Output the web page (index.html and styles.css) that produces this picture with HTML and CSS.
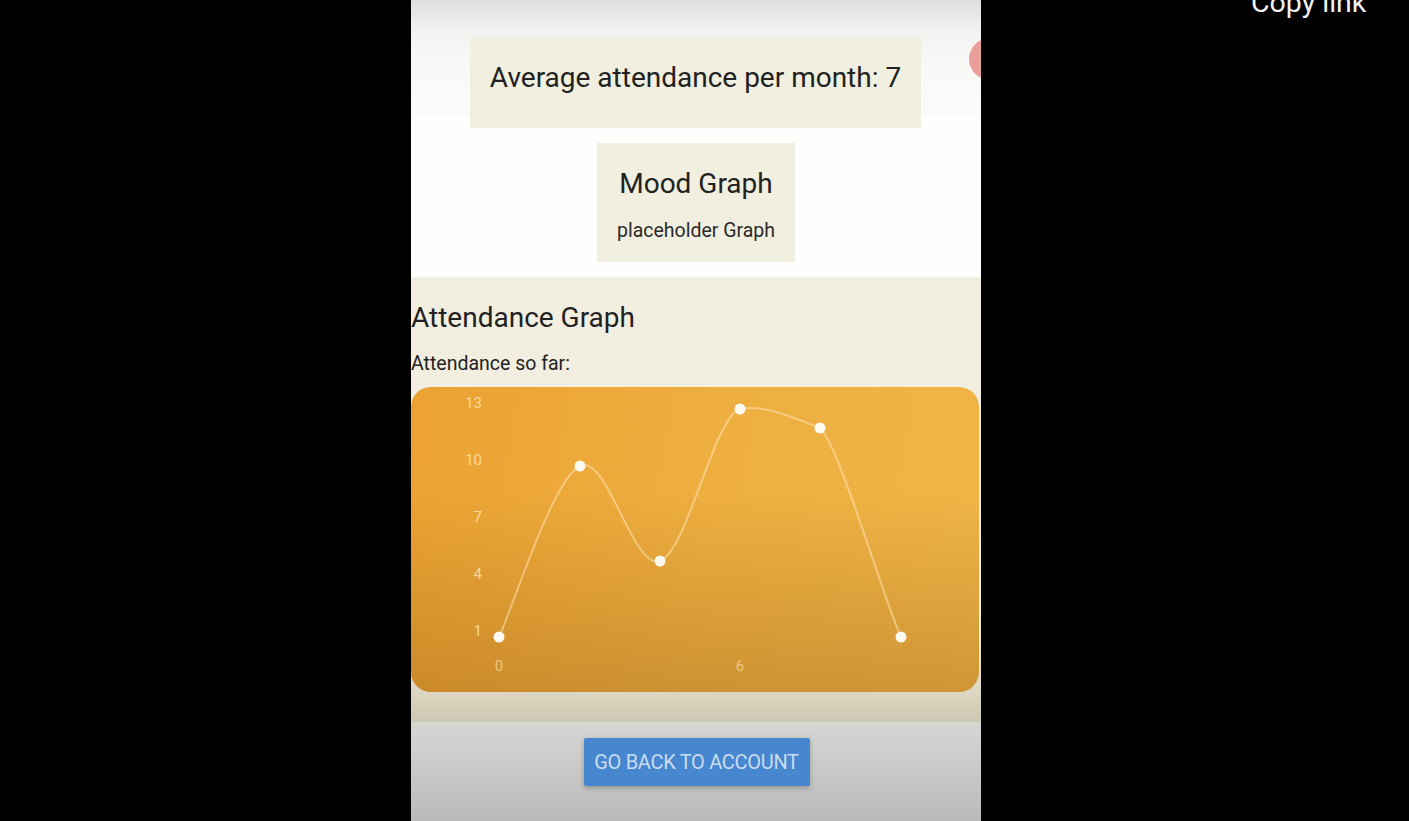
FILE: index.html
```html
<!DOCTYPE html>
<html>
<head>
<meta charset="utf-8">
<link rel="stylesheet" href="styles.css">
</head>
<body>
<div class="stage">
  <div class="phone">
    <div class="top">
      <div class="avg-box">Average attendance per month: 7</div>
      <div class="mood-box">
        <div class="mood-title">Mood Graph</div>
        <div class="mood-sub">placeholder Graph</div>
      </div>
    </div>
    <div class="section">
      <div class="sec-title">Attendance Graph</div>
      <div class="sec-sub">Attendance so far:</div>
      <div class="chart">
        <svg class="chart-svg" viewBox="0 0 568 305" width="568" height="305">
          <g class="ylabels">
            <text x="71" y="21">13</text>
            <text x="71" y="78">10</text>
            <text x="71" y="135">7</text>
            <text x="71" y="192">4</text>
            <text x="71" y="249">1</text>
          </g>
          <g class="xlabels">
            <text x="88" y="284">0</text>
            <text x="329" y="284">6</text>
          </g>
          <path class="curve" d="M88,250 C101.8,221 141.6,91.9 169,79 C196.4,66.1 221.8,183.7 249,174 C276.2,164.3 303,30 329,22 C352,17 384,31 409,41 C428,58 470,205 490,250"/>
          <g class="dots">
            <circle cx="88" cy="250" r="5.5"/>
            <circle cx="169" cy="79" r="5.5"/>
            <circle cx="249" cy="174" r="5.5"/>
            <circle cx="329" cy="22" r="5.5"/>
            <circle cx="409" cy="41" r="5.5"/>
            <circle cx="490" cy="250" r="5.5"/>
          </g>
        </svg>
      </div>
    </div>
    <div class="bottom">
      <button class="back-btn">GO BACK TO ACCOUNT</button>
    </div>
    <div class="fab"></div>
  </div>
  <div class="copy-link">Copy link</div>
</div>
</body>
</html>
```
FILE: styles.css
```css
html, body {
  margin: 0;
  padding: 0;
  background: #000;
  width: 1409px;
  height: 821px;
  overflow: hidden;
  font-family: Roboto, "Liberation Sans", sans-serif;
}
.stage {
  position: relative;
  width: 1409px;
  height: 821px;
  padding-left: 411px;
  box-sizing: border-box;
}
.phone {
  position: relative;
  width: 570px;
  height: 821px;
  display: flex;
  flex-direction: column;
  overflow: hidden;
}
.top {
  height: 277px;
  box-sizing: border-box;
  padding-top: 37px;
  display: flex;
  flex-direction: column;
  align-items: center;
  gap: 15px;
  background: linear-gradient(180deg, #dedede 0px, #f2f2f1 30px, #f8f8f6 60px, #fbfbf9 114px, #fefefd 118px, #fefefd 277px);
}
.avg-box {
  width: 451px;
  height: 91px;
  margin-left: -1px;
  background: #f1efdf;
  display: flex;
  align-items: center;
  justify-content: center;
  font-size: 28px;
  color: #222;
  padding-bottom: 10px;
  box-sizing: border-box;
}
.mood-box {
  width: 198px;
  height: 119px;
  background: #f1efdf;
  display: flex;
  flex-direction: column;
  align-items: center;
  box-sizing: border-box;
  padding-top: 25px;
}
.mood-title {
  font-size: 28px;
  color: #222;
  line-height: 32px;
}
.mood-sub {
  font-size: 19.5px;
  color: #2a2a2a;
  margin-top: 20px;
  line-height: 22px;
}
.section {
  height: 445px;
  box-sizing: border-box;
  background: linear-gradient(180deg, #f2efe1 0%, #f1eedf 80%, #ddd7c3 93%, #cdc8b2 100%);
  padding-top: 25px;
}
.sec-title {
  font-size: 28px;
  color: #222;
  line-height: 32px;
}
.sec-sub {
  font-size: 19.5px;
  color: #222;
  line-height: 22px;
  margin-top: 19px;
}
.chart {
  margin-top: 12px;
  width: 568px;
  height: 305px;
  border-radius: 20px;
  overflow: hidden;
  background:
    linear-gradient(180deg, rgba(0,0,0,0) 0%, rgba(0,0,0,0) 35%, rgba(120,70,10,0.28) 100%),
    linear-gradient(100deg, #eba232 0%, #eeae40 50%, #f0b547 100%);
}
.chart-svg {
  display: block;
}
.ylabels text {
  font-family: Roboto, "Liberation Sans", sans-serif;
  font-size: 15px;
  fill: rgba(255, 236, 190, 0.75);
  text-anchor: end;
}
.xlabels text {
  font-family: Roboto, "Liberation Sans", sans-serif;
  font-size: 15px;
  fill: rgba(255, 236, 190, 0.6);
  text-anchor: middle;
}
.curve {
  fill: none;
  stroke: rgba(255, 236, 190, 0.5);
  stroke-width: 2;
}
.dots circle {
  fill: #fffaf0;
}
.bottom {
  flex: 1;
  background: linear-gradient(180deg, #d6d6d3 0%, #cbcbca 40%, #bababa 100%);
  display: flex;
  justify-content: center;
  padding-top: 16px;
  box-sizing: border-box;
}
.back-btn {
  width: 226px;
  height: 48px;
  margin-left: 1px;
  border: none;
  border-radius: 2px;
  background: #4787d0;
  color: #cadcef;
  font-family: Roboto, "Liberation Sans", sans-serif;
  font-size: 20px;
  letter-spacing: -0.3px;
  box-shadow: 0 2px 5px rgba(0,0,0,0.25);
  padding: 0;
}
.fab {
  position: absolute;
  left: 558px;
  top: 38px;
  width: 42px;
  height: 42px;
  border-radius: 50%;
  background: #e9a09b;
}
.copy-link {
  position: absolute;
  left: 1251px;
  top: -14px;
  font-size: 28.5px;
  line-height: 34px;
  color: #f2f2f2;
}
```
